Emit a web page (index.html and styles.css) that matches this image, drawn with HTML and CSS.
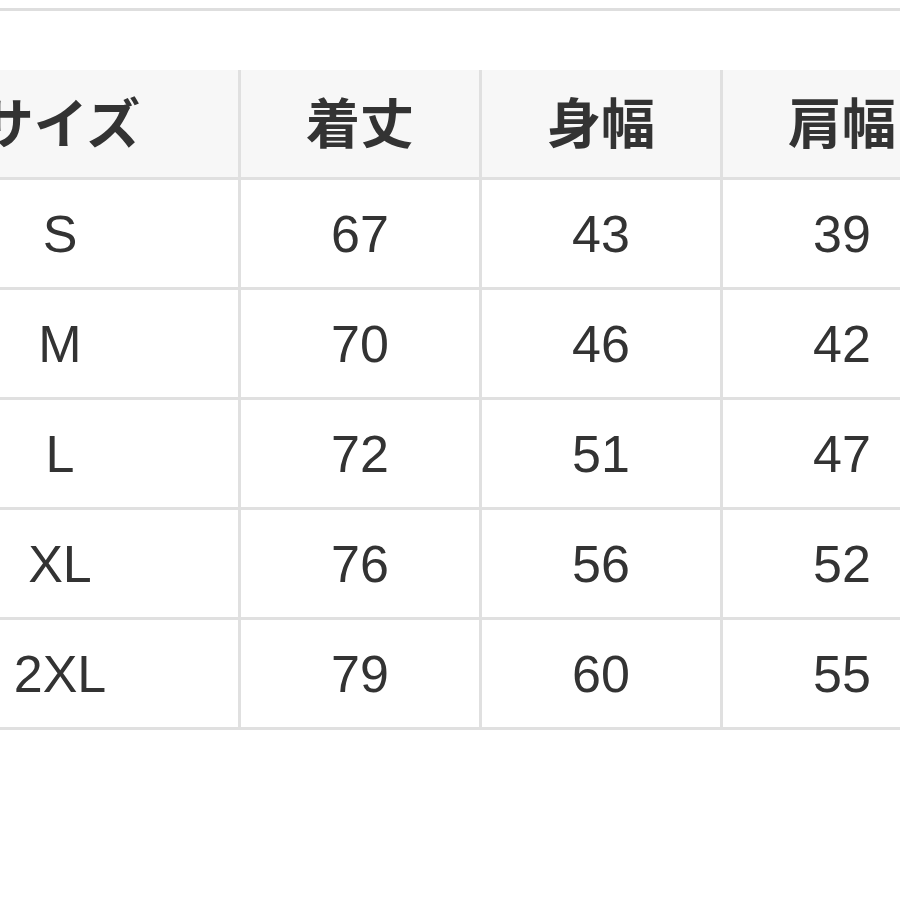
FILE: index.html
```html
<!DOCTYPE html>
<html lang="ja">
<head>
<meta charset="utf-8">
<link rel="stylesheet" href="styles.css">
</head>
<body>
<div class="page">
  <div class="topline"></div>
  <div class="table">
    <div class="cell head">サイズ</div>
    <div class="cell head">着丈</div>
    <div class="cell head">身幅</div>
    <div class="cell head">肩幅</div>

    <div class="cell">S</div><div class="cell">67</div><div class="cell">43</div><div class="cell">39</div>
    <div class="cell">M</div><div class="cell">70</div><div class="cell">46</div><div class="cell">42</div>
    <div class="cell">L</div><div class="cell">72</div><div class="cell">51</div><div class="cell">47</div>
    <div class="cell">XL</div><div class="cell">76</div><div class="cell">56</div><div class="cell">52</div>
    <div class="cell">2XL</div><div class="cell">79</div><div class="cell">60</div><div class="cell">55</div>
  </div>
</div>
</body>
</html>
```

FILE: styles.css
```css
html, body {
  margin: 0;
  padding: 0;
  background: #ffffff;
}
body {
  width: 900px;
  height: 900px;
  overflow: hidden;
  font-family: "Liberation Sans", "Noto Sans CJK JP", sans-serif;
  color: #333333;
}
.page {
  padding-top: 8px;
}
.topline {
  height: 3px;
  background: #dedede;
}
.table {
  margin-top: 59px;
  margin-left: -118px;
  width: 1079px;
  display: grid;
  grid-template-columns: 356px 238px 238px 238px;
  grid-template-rows: 107px repeat(5, 107px);
  gap: 3px;
  padding-bottom: 3px;
  background: #e0e0e0;
}
.cell {
  background: #ffffff;
  display: flex;
  align-items: center;
  justify-content: center;
  font-size: 52px;
  line-height: 1;
}
.head {
  background: #f7f7f7;
  font-family: "Noto Sans CJK JP", sans-serif;
  font-weight: 700;
  font-size: 54px;
  padding-bottom: 6px;
  box-sizing: border-box;
}
```
